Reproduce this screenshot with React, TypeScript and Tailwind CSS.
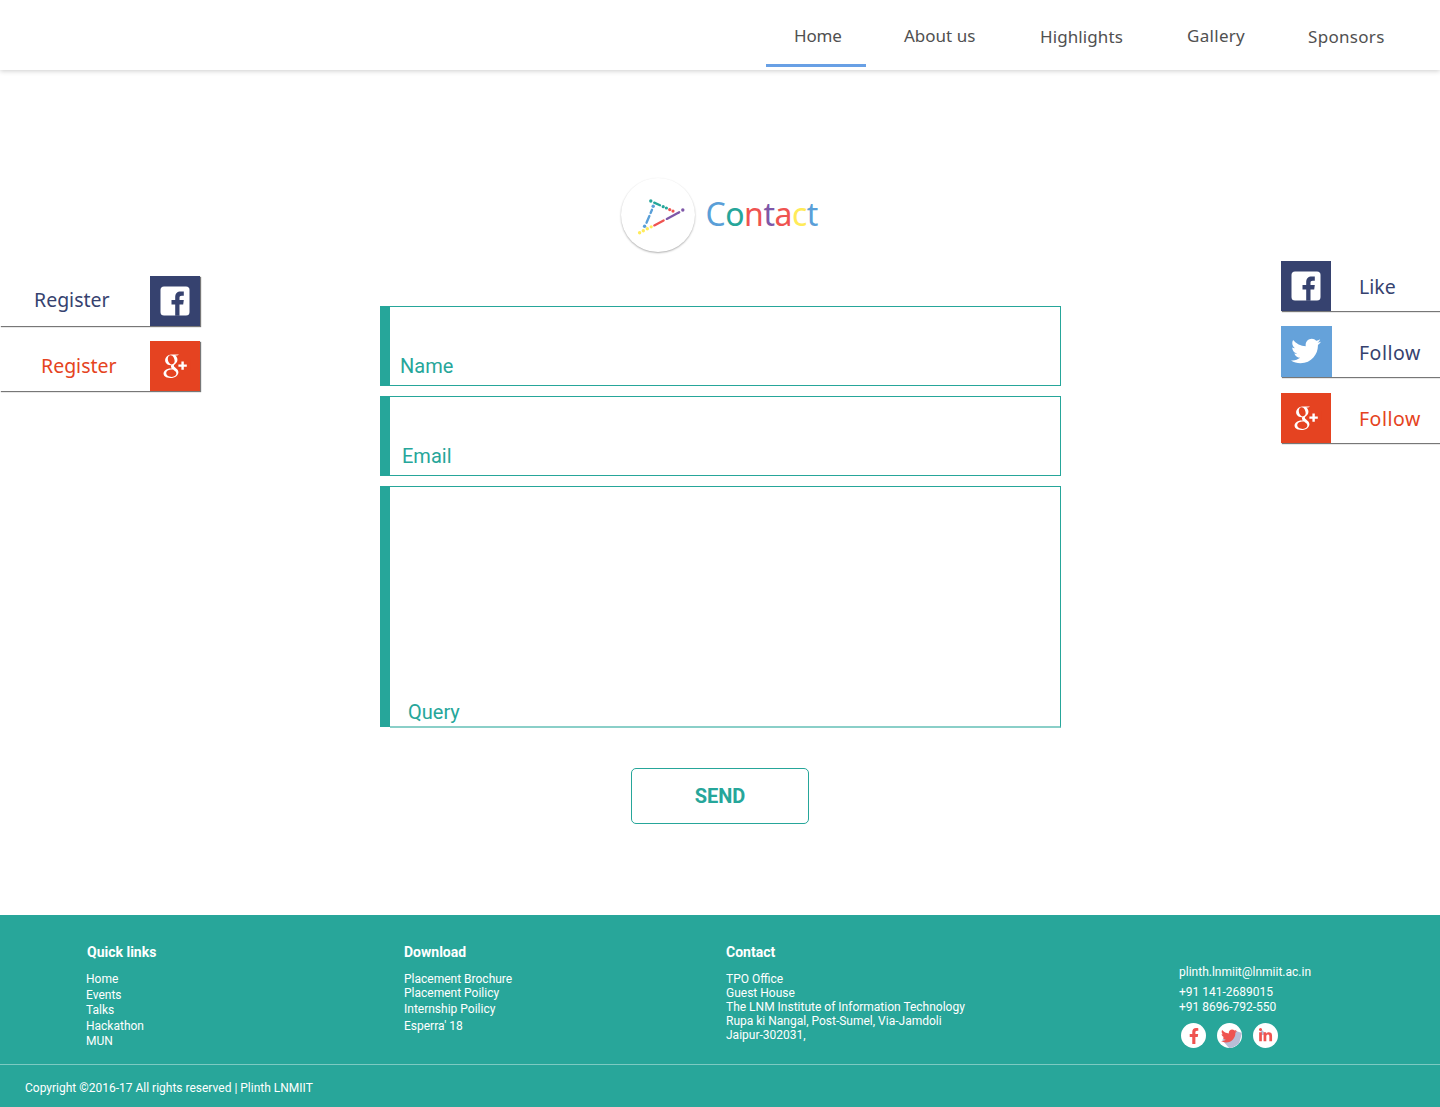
import React from "react";
import { FaFacebookF, FaLinkedinIn, FaTwitter } from "react-icons/fa";
import { TiSocialGooglePlus } from "react-icons/ti";

function FacebookIcon() {
  return (
    <svg viewBox="0 0 50 50" className="size-[50px]">
      <rect x="10.5" y="10.5" width="29" height="29" rx="3.5" fill="#fff" />
      <path
        d="M25.2 39.8V28.4h-3.7V24h3.7v-2.6c0-3.9 2-5.9 5.600-5.900h3v4.300h-2c-1.800 0-2.300.7-2.300 2.200v2h4.300l-.6 4.400h-3.700v11.400z"
        fill="#36426f"
      />
    </svg>
  );
}

function GooglePlusIcon() {
  return (
    <svg viewBox="0 0 50 50" className="size-[50px]">
      <TiSocialGooglePlus x="5.3" y="5.5" size={38} color="#fff" />
      <rect x="28.800" y="18" width="12" height="12" fill="#e54321" />
      <path d="M28.400 24.600H36.800M32.600 20.400V28.800" stroke="#fff" strokeWidth="2.400" />
    </svg>
  );
}

function PlinthMark() {
  return (
    <svg viewBox="0 0 74 74" className="size-[74px]" fill="none" strokeLinecap="round">
      <g strokeWidth="2.300">
        <path d="M33.200 24.600L39 27.200" stroke="#26a69a" />
        <path d="M31 31.700L29.600 35M28.400 38L25.500 44.800" stroke="#5a9fd8" />
        <path d="M33.300 47.400L42.600 42.400" stroke="#ef5350" />
        <path d="M45.800 40.900L58.200 34.200" stroke="#7e57a8" />
      </g>
      <g fill="#26a69a">
        <circle cx="29.800" cy="23" r="1.700" />
        <circle cx="42.200" cy="28.700" r="1.600" />
        <circle cx="45.400" cy="30" r="1.600" />
      </g>
      <g fill="#ef5350">
        <circle cx="48.700" cy="31.600" r="1.600" />
        <circle cx="52" cy="33.100" r="1.600" />
      </g>
      <circle cx="61.800" cy="32" r="1.700" fill="#7e57a8" />
      <g fill="#5a9fd8">
        <circle cx="32.200" cy="28.300" r="1.700" />
        <circle cx="23.600" cy="48.200" r="1.700" />
      </g>
      <g fill="#ffeb59">
        <circle cx="18.600" cy="54.700" r="1.700" />
        <circle cx="22.300" cy="52.700" r="1.700" />
        <circle cx="26.300" cy="50.800" r="1.700" />
        <circle cx="30.200" cy="48.800" r="1.600" />
      </g>
    </svg>
  );
}

const title = [
  ["C", "text-[#5a9fd8]"],
  ["o", "text-[#26a69a]"],
  ["n", "text-[#ef5350]"],
  ["t", "text-[#7e57a8]"],
  ["a", "text-[#ef5350]"],
  ["c", "text-[#ffeb59]"],
  ["t", "text-[#5a9fd8]"],
];

function Line({ children, className = "" }: { children: React.ReactNode; className?: string }) {
  return <p className={"h-[14px] whitespace-nowrap " + className}>{children}</p>;
}

export default function App() {
  return (
    <div className="flex h-[1107px] w-[1440px] flex-col overflow-hidden bg-white font-['Roboto',sans-serif]">
      <header className="flex h-[70px] shrink-0 bg-white pl-[766px] shadow-[0_1px_5px_rgba(0,0,0,0.2)]">
        <nav className="flex font-['Noto_Sans',sans-serif] text-[17px] leading-5 font-[450] whitespace-nowrap text-[#505050]">
          <a className="mr-[38px] h-[67px] w-[100px] border-b-3 border-[#68a0e5] pt-[26px] pl-[28px] tracking-[-0.2px]">Home</a>
          <a className="w-[136px] pt-[26px]">About us</a>
          <a className="w-[147px] pt-[27px] tracking-[0.1px]">Highlights</a>
          <a className="w-[121px] pt-[26px] tracking-[0.3px]">Gallery</a>
          <a className="pt-[27px] tracking-[0.3px]">Sponsors</a>
        </nav>
      </header>

      <main className="flex h-[845px] shrink-0">
        <aside className="flex w-[200px] flex-col gap-[15px] pt-[206px] font-['Noto_Sans',sans-serif] text-[19.5px] leading-6 font-[450] text-[#36426f]">
          <a className="flex h-[50px] justify-between bg-white pl-[34px] shadow-[1px_1px_1px_#777]">
            <span className="pt-[12px]">Register</span>
            <span className="size-[50px] bg-[#36426f]"><FacebookIcon /></span>
          </a>
          <a className="flex h-[50px] justify-between bg-white pl-[41px] text-[#e54321] shadow-[1px_1px_1px_#777]">
            <span className="pt-[13px]">Register</span>
            <span className="size-[50px] bg-[#e54321]"><GooglePlusIcon /></span>
          </a>
        </aside>

        <section className="ml-[180px] flex w-[681px] flex-col items-center pt-[108px]">
          <div className="flex h-[75px] w-[200px] gap-[11px]">
            <div className="size-[74px] shrink-0 rounded-full bg-white shadow-[0_1px_2px_rgba(0,0,0,0.32)]">
              <PlinthMark />
            </div>
            <h1 className="pt-[16px] font-['Noto_Sans',sans-serif] text-[32px] leading-10 tracking-[-0.5px] whitespace-nowrap">
              {title.map(([letter, color], i) => (
                <span key={i} className={color}>{letter}</span>
              ))}
            </h1>
          </div>

          <form className="mt-[53px] flex w-[681px] flex-col gap-[10px] text-[20px] leading-6 text-[#26a69a]">
            <label className="flex h-[80px] items-end border border-l-10 border-[#26a69a] pb-[7px] pl-[10px]">Name</label>
            <label className="flex h-[80px] items-end border border-l-10 border-[#26a69a] pb-[7px] pl-[12px]">Email</label>
            <div className="flex h-[242px]">
              <div className="h-[241px] w-[10px] bg-[#26a69a]" />
              <label className="flex flex-1 items-end border-t border-r border-b-2 border-[#26a69a] border-b-[#8acfc8] pb-[2px] pl-[18px]">Query</label>
            </div>
          </form>

          <button className="mt-[40px] mr-[1px] h-[56px] w-[178px] rounded-[5px] border border-[#26a69a] text-[20px] font-bold text-[#26a69a]">
            SEND
          </button>
        </section>

        <aside className="ml-[220px] flex w-[159px] flex-col pt-[191px] font-['Noto_Sans',sans-serif] text-[19.5px] leading-6 font-[450] text-[#36426f]">
          <a className="flex h-[50px] gap-[28px] bg-white shadow-[1px_1px_1px_#777]">
            <span className="size-[50px] bg-[#36426f]"><FacebookIcon /></span>
            <span className="pt-[14px]">Like</span>
          </a>
          <a className="mt-[15px] flex h-[51px] gap-[27px] bg-white shadow-[1px_1px_1px_#777]">
            <span className="flex size-[51px] items-center justify-center bg-[#65a2da]"><FaTwitter className="mr-[2px] mb-[1px] size-[30px] text-white" /></span>
            <span className="pt-[15px] tracking-[0.5px]">Follow</span>
          </a>
          <a className="mt-[16px] flex h-[50px] gap-[28px] bg-white text-[#e54321] shadow-[1px_1px_1px_#777]">
            <span className="size-[50px] bg-[#e54321]"><GooglePlusIcon /></span>
            <span className="pt-[14px] tracking-[0.5px]">Follow</span>
          </a>
        </aside>
      </main>

      <footer className="flex h-[192px] shrink-0 flex-col bg-[#28a69a] text-[12px] leading-[14px] text-white">
        <div className="flex h-[149px] pl-[86px]">
          <div className="w-[318px] pt-[29px]">
            <h2 className="mb-[12px] pl-px text-[14px] leading-4 font-bold">Quick links</h2>
            <Line>Home</Line>
            <Line className="mt-[2px]">Events</Line>
            <Line className="mt-px">Talks</Line>
            <Line className="mt-[2px]">Hackathon</Line>
            <Line className="mt-px">MUN</Line>
          </div>
          <div className="w-[322px] pt-[29px]">
            <h2 className="mb-[12px] text-[14px] leading-4 font-bold">Download</h2>
            <Line>Placement Brochure</Line>
            <Line>Placement Poilicy</Line>
            <Line className="mt-[2px]">Internship Poilicy</Line>
            <Line className="mt-[3px]">Esperra' 18</Line>
          </div>
          <div className="w-[453px] pt-[29px]">
            <h2 className="mb-[12px] text-[14px] leading-4 font-bold">Contact</h2>
            <Line>TPO Office</Line>
            <Line>Guest House</Line>
            <Line>The LNM Institute of Information Technology</Line>
            <Line>Rupa ki Nangal, Post-Sumel, Via-Jamdoli</Line>
            <Line>Jaipur-302031,</Line>
          </div>
          <div className="pt-[50px]">
            <Line>plinth.lnmiit@lnmiit.ac.in</Line>
            <Line className="mt-[6px]">+91 141-2689015</Line>
            <Line className="mt-px">+91 8696-792-550</Line>
            <div className="mt-[9px] ml-[2px] flex gap-[11px] text-[#ef5350]">
              <span className="flex size-[25px] items-center justify-center rounded-full bg-white"><FaFacebookF className="size-[16px]" /></span>
              <span className="relative flex size-[25px] items-center justify-center overflow-hidden rounded-full bg-white">
                <svg viewBox="0 0 26 26" className="absolute inset-0 size-[26px]">
                  <path d="M19 8L25 10L22 21L13 26L5 17Z" fill="#b9bdd6" />
                </svg>
                <FaTwitter className="relative mr-[1px] size-[16px]" />
              </span>
              <span className="relative flex size-[25px] items-center justify-center rounded-full bg-white">
                <svg viewBox="0 0 26 26" className="absolute inset-0 size-[26px]">
                  <path d="M8 6L14 12L8 12Z" fill="#b9bdd6" />
                </svg>
                <FaLinkedinIn className="relative size-[15px]" />
              </span>
            </div>
          </div>
        </div>
        <div className="h-[43px] border-t border-[#7dcac2] pt-[16px] pl-[25px]">Copyright ©2016-17 All rights reserved | Plinth LNMIIT</div>
      </footer>
    </div>
  );
}
